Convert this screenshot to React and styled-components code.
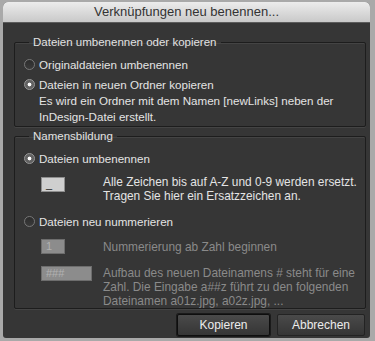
import React from 'react';
import styled, { createGlobalStyle } from 'styled-components';

const GlobalStyle = createGlobalStyle`
  html, body {
    margin: 0;
    padding: 0;
    background: #a9a9a9;
  }
  body {
    font-family: 'Liberation Sans', Arial, sans-serif;
  }
`;

function App() {
  return (
    <>
      <GlobalStyle />
      <Window>
        <TitleBar>Verknüpfungen neu benennen...</TitleBar>
        <Body>
          <Group>
            <Legend>Dateien umbenennen oder kopieren</Legend>
            <RadioRow>
              <Radio />
              <Label>Originaldateien umbenennen</Label>
            </RadioRow>
            <RadioRow top={4}>
              <Radio checked />
              <Label>
                Dateien in neuen Ordner kopieren
                <br />
                Es wird ein Ordner mit dem Namen [newLinks] neben der
                <br />
                InDesign-Datei erstellt.
              </Label>
            </RadioRow>
          </Group>

          <Group last>
            <Legend>Namensbildung</Legend>
            <RadioRow>
              <Radio checked />
              <Label>Dateien umbenennen</Label>
            </RadioRow>
            <FieldRow top={8}>
              <Field width={24} offset={2}>_</Field>
              <Hint>
                Alle Zeichen bis auf A-Z und 0-9 werden ersetzt.
                <br />
                Tragen Sie hier ein Ersatzzeichen an.
              </Hint>
            </FieldRow>
            <RadioRow top={11}>
              <Radio />
              <Label>Dateien neu nummerieren</Label>
            </RadioRow>
            <FieldRow top={9}>
              <Field width={24} disabled>1</Field>
              <Hint disabled shift={1}>Nummerierung ab Zahl beginnen</Hint>
            </FieldRow>
            <FieldRow top={12}>
              <Field width={51} disabled>###</Field>
              <Hint disabled>
                Aufbau des neuen Dateinamens # steht für eine
                <br />
                Zahl. Die Eingabe a##z führt zu den folgenden
                <br />
                Dateinamen a01z.jpg, a02z.jpg, ...
              </Hint>
            </FieldRow>
          </Group>

          <Buttons>
            <Button primary width={93}>Kopieren</Button>
            <Button width={88}>Abbrechen</Button>
          </Buttons>
        </Body>
      </Window>
    </>
  );
}

const Window = styled.div`
  margin: 2px 5px 3px 3px;
  height: 336px;
  border-radius: 5px 5px 3px 3px;
  overflow: hidden;
  background: #363636;
  display: flex;
  flex-direction: column;
`;

const TitleBar = styled.div`
  height: 20px;
  flex: none;
  background: linear-gradient(#ececec, #c9c9c9);
  border-bottom: 1px solid #5c5c5c;
  color: #333;
  font-size: 13px;
  line-height: 20px;
  text-align: center;
`;

const Body = styled.div`
  padding: 11px 4px 0 11px;
  display: flex;
  flex-direction: column;
  white-space: nowrap;
`;

const Group = styled.fieldset`
  margin: 0 0 ${(p) => (p.last ? '5px' : '1px')};
  padding: 4px 8px ${(p) => (p.last ? '0' : '1px')} 9px;
  border: 1px solid #1d1d1d;
  border-radius: 2px;
  box-shadow: 0 1px 0 #444, inset 0 1px 0 #444;
  min-width: 0;
`;

const Legend = styled.legend`
  padding: 0 4px;
  margin-left: 5px;
  color: #e2e2e2;
  font-size: 11.5px;
  line-height: 16px;
`;

const RadioRow = styled.div`
  display: flex;
  align-items: flex-start;
  gap: 4px;
  margin-top: ${(p) => (p.top != null ? p.top : 3)}px;
`;

const Radio = styled.span`
  flex: none;
  width: 11px;
  height: 11px;
  margin-top: 2px;
  border-radius: 50%;
  box-sizing: border-box;
  border: 1px solid ${(p) => (p.checked ? '#9a9a9a' : '#777')};
  background: ${(p) =>
    p.checked
      ? 'radial-gradient(circle, #fff 0 1.6px, #666 2.2px, #555 100%)'
      : 'linear-gradient(#2c2c2c, #3a3a3a)'};
`;

const Label = styled.div`
  color: #e4e4e4;
  font-size: 11.6px;
  line-height: 16px;
`;

const FieldRow = styled.div`
  display: flex;
  align-items: flex-start;
  margin: ${(p) => p.top}px 0 0 17px;
`;

const Field = styled.div`
  flex: none;
  width: ${(p) => p.width}px;
  height: 15px;
  box-sizing: border-box;
  margin-top: ${(p) => p.offset || 0}px;
  margin-right: ${(p) => 62 - p.width}px;
  padding-left: 4px;
  background: ${(p) => (p.disabled ? '#8c8c8c' : '#cfcfcf')};
  border: 1px solid ${(p) => (p.disabled ? '#6d6d6d' : '#8e8e8e')};
  color: ${(p) => (p.disabled ? '#b2b2b2' : '#222')};
  font-size: 11px;
  line-height: 13px;
`;

const Hint = styled.div`
  margin-top: ${(p) => p.shift || 0}px;
  color: ${(p) => (p.disabled ? '#8a8a8a' : '#e4e4e4')};
  font-size: 11.9px;
  line-height: 14px;
`;

const Buttons = styled.div`
  display: flex;
  justify-content: flex-end;
  gap: 7px;
  padding-right: 1px;
`;

const Button = styled.button`
  width: ${(p) => p.width}px;
  height: 22px;
  font-family: inherit;
  font-size: 12px;
  color: #ececec;
  background: linear-gradient(#4a4a4a, #353535);
  border: 1px solid ${(p) => (p.primary ? '#0e0e0e' : '#232323')};
  box-shadow: ${(p) => (p.primary ? '0 0 0 1px #1a1a1a' : 'none')};
  border-radius: 2px;
  padding: 0;
`;

export default App;
